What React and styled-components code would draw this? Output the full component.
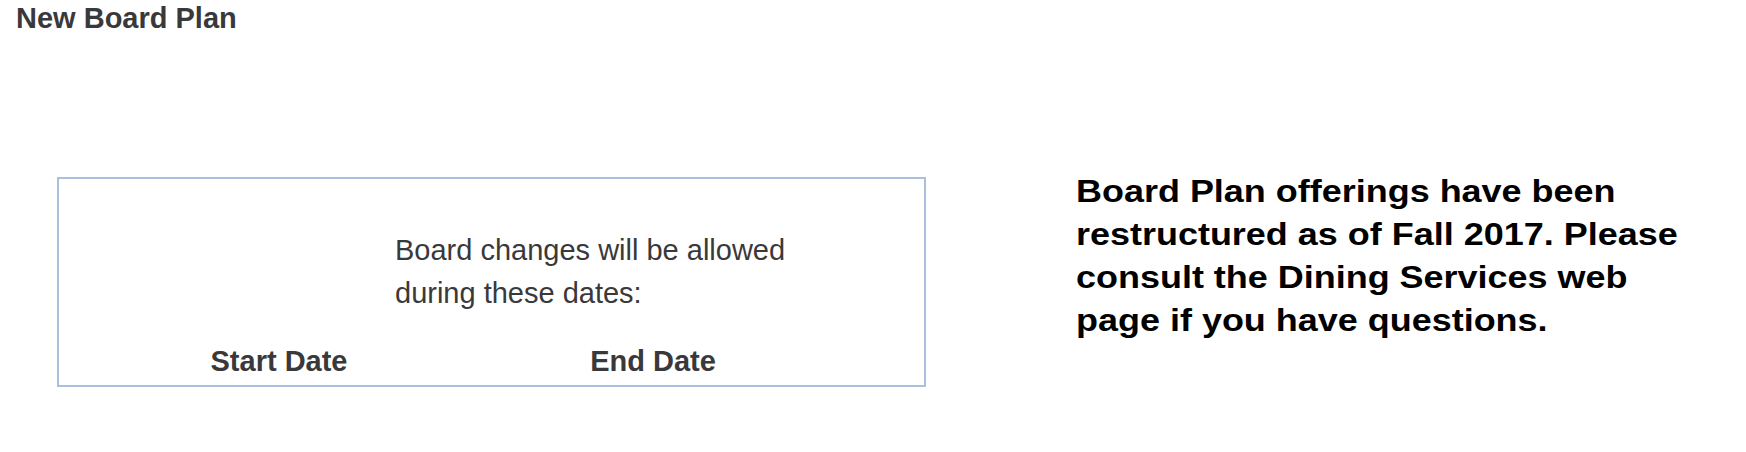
import React from 'react'
import styled, { createGlobalStyle } from 'styled-components'

const GlobalStyle = createGlobalStyle`
  html, body {
    margin: 0;
    padding: 0;
    background: #fff;
  }
  body {
    font-family: "Liberation Sans", Arial, Helvetica, sans-serif;
  }
`

function App () {
  return (
    <>
      <GlobalStyle />
      <Page>
        <Title>New Board Plan</Title>
        <Content>
          <DatesBox>
            <Notice>Board changes will be allowed during these dates:</Notice>
            <DatesRow>
              <DateHead>Start Date</DateHead>
              <DateHead>End Date</DateHead>
            </DatesRow>
          </DatesBox>
          <Announcement>
            Board Plan offerings have been restructured as of Fall 2017. Please
            consult the Dining Services web page if you have questions.
          </Announcement>
        </Content>
      </Page>
    </>
  )
}

const Page = styled.div`
  padding: 2px 0 0 16px;
`

const Title = styled.h1`
  margin: 0;
  font-size: 29px;
  line-height: 33px;
  font-weight: bold;
  color: #39393b;
`

const Content = styled.div`
  display: flex;
  align-items: flex-start;
  gap: 150px;
  margin-top: 135px;
  padding-left: 41px;
`

const DatesBox = styled.div`
  box-sizing: border-box;
  width: 869px;
  height: 210px;
  margin-top: 7px;
  border: 2px solid #a9c1da;
  padding: 50px 0 2px 0;
`

const Notice = styled.p`
  margin: 0 0 25px 336px;
  width: 400px;
  font-size: 29px;
  line-height: 43px;
  color: #39393b;
`

const DatesRow = styled.div`
  display: grid;
  grid-template-columns: 374px 374px;
  margin-left: 33px;
`

const DateHead = styled.div`
  text-align: center;
  font-size: 29px;
  line-height: 43px;
  font-weight: bold;
  color: #39393b;
`

const Announcement = styled.p`
  margin: 0;
  width: 530px;
  font-size: 31px;
  line-height: 43px;
  font-weight: bold;
  color: #000;
  transform: scaleX(1.16);
  transform-origin: left top;
`

export default App
